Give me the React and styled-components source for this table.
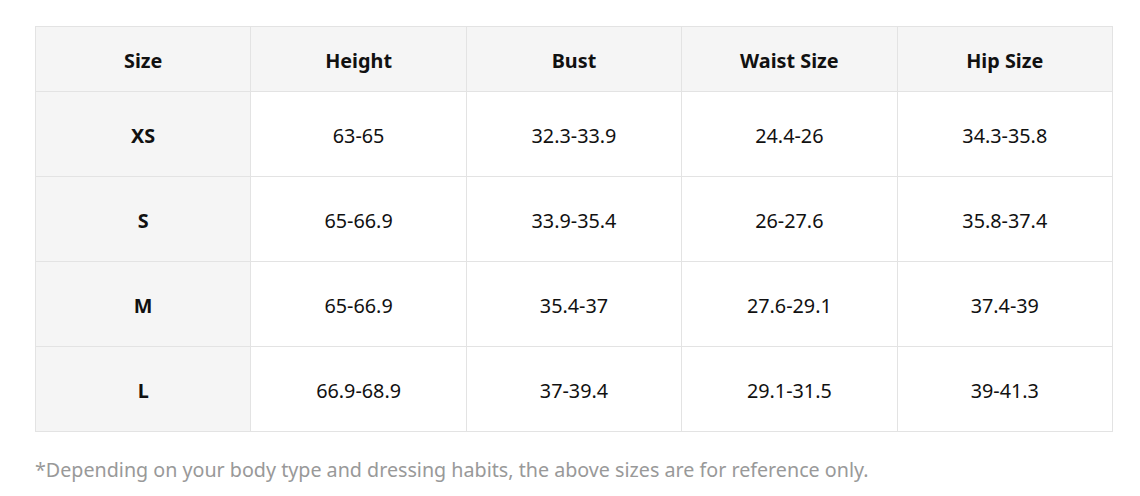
import styled, { createGlobalStyle } from 'styled-components'

const GlobalStyle = createGlobalStyle`
body {
    margin: 0;
    background: #ffffff;
    font-family: "Noto Sans", "Open Sans", "Liberation Sans", sans-serif;
    color: #111111;
}
`

const headers = ["Size", "Height", "Bust", "Waist Size", "Hip Size"];

const rows = [
    ["XS", "63-65", "32.3-33.9", "24.4-26", "34.3-35.8"],
    ["S", "65-66.9", "33.9-35.4", "26-27.6", "35.8-37.4"],
    ["M", "65-66.9", "35.4-37", "27.6-29.1", "37.4-39"],
    ["L", "66.9-68.9", "37-39.4", "29.1-31.5", "39-41.3"],
];

export default function App() {
    return (
        <Page>
            <GlobalStyle />
            <Table>
                <thead>
                    <tr>
                        {headers.map(h => <HeadCell key={h}>{h}</HeadCell>)}
                    </tr>
                </thead>
                <tbody>
                    {rows.map(row => (
                        <tr key={row[0]}>
                            <SizeCell>{row[0]}</SizeCell>
                            {row.slice(1).map((v, i) => <Cell key={i}>{v}</Cell>)}
                        </tr>
                    ))}
                </tbody>
            </Table>
            <Note>*Depending on your body type and dressing habits, the above sizes are for reference only.</Note>
        </Page>
    );
}

const Page = styled.div`
padding: 26px 27px 0 35px;
`

const Table = styled.table`
width: 1078px;
border-collapse: collapse;
table-layout: fixed;
border: 1px solid #e3e3e3;
`

const HeadCell = styled.th`
height: 65px;
padding: 3px 0 0 0;
box-sizing: border-box;
background: #f5f5f5;
border: 1px solid #e3e3e3;
font-size: 19.8px;
font-weight: 700;
text-align: center;
color: #111;
`

const Cell = styled.td`
height: 85px;
padding: 3px 0 0 0;
box-sizing: border-box;
border: 1px solid #e3e3e3;
font-size: 19.8px;
text-align: center;
color: #111;
`

const SizeCell = styled(Cell)`
background: #f5f5f5;
font-weight: 700;
`

const Note = styled.p`
margin: 25px 0 0 0;
font-size: 19.7px;
line-height: 26px;
color: #999999;
`
